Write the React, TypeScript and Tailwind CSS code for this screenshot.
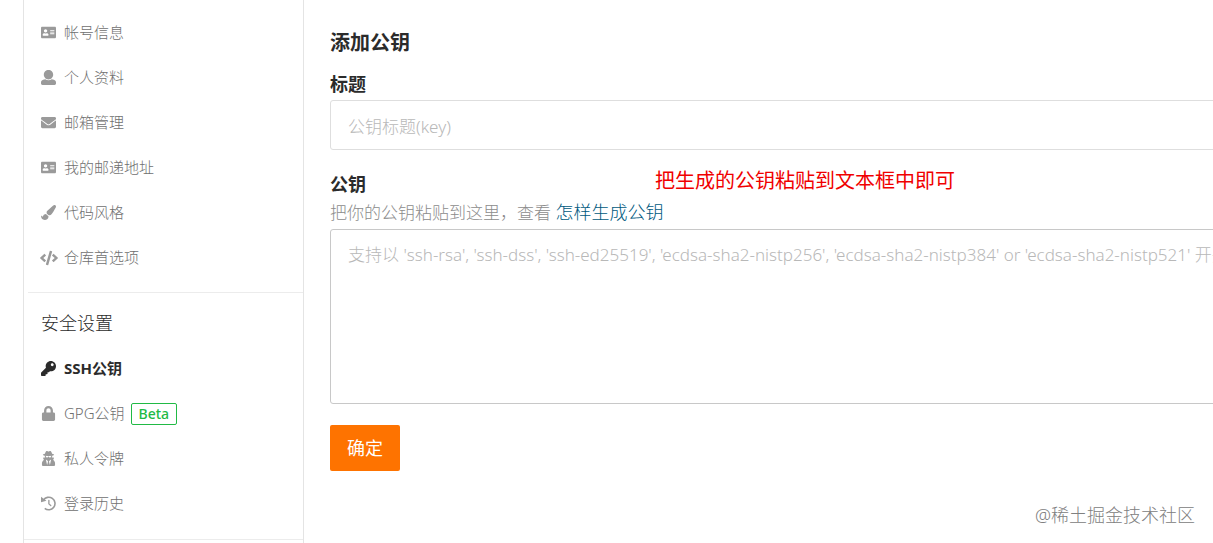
import { ReactNode } from 'react';
import { FaAddressCard, FaCode, FaEnvelope, FaKey, FaLock, FaPaintBrush, FaUserSecret } from 'react-icons/fa';

interface MenuItem {
  label: string;
  icon: ReactNode;
  active?: boolean;
  badge?: string;
}

function UserIcon() {
  return (
    <svg className="h-[15px] w-[15px]" viewBox="0 0 512 512" fill="currentColor">
      <path d="M256 0c88.366 0 160 71.634 160 160s-71.634 160-160 160S96 248.366 96 160 167.634 0 256 0zm183.283 333.821l-71.313-17.828c-74.923 53.89-165.738 41.864-223.94 0l-71.313 17.828C29.981 344.505 0 382.903 0 426.955V464c0 26.51 21.49 48 48 48h416c26.51 0 48-21.49 48-48v-37.045c0-44.052-29.981-82.45-72.717-93.134z" />
    </svg>
  );
}

function HistoryIcon() {
  return (
    <svg className="h-[15px] w-[15px]" viewBox="0 0 16 16" fill="none" stroke="currentColor">
      <path strokeWidth={1.7} d="M2.6 4.4A6.7 6.7 0 1 1 4 13.2" />
      <path strokeWidth={1.4} strokeLinecap="round" strokeLinejoin="round" d="M8.4 4.6v3.8l2 1.8" />
      <path fill="currentColor" stroke="none" d="M0 .9l5.8 4.2L0 6.6z" />
    </svg>
  );
}

const accountItems: MenuItem[] = [
  { label: '帐号信息', icon: <FaAddressCard /> },
  { label: '个人资料', icon: <UserIcon /> },
  { label: '邮箱管理', icon: <FaEnvelope /> },
  { label: '我的邮递地址', icon: <FaAddressCard /> },
  { label: '代码风格', icon: <FaPaintBrush /> },
  { label: '仓库首选项', icon: <FaCode className="h-[18px] w-[18px] shrink-0" /> },
];

const securityItems: MenuItem[] = [
  { label: 'SSH公钥', icon: <FaKey />, active: true },
  { label: 'GPG公钥', icon: <FaLock />, badge: 'Beta' },
  { label: '私人令牌', icon: <FaUserSecret /> },
  { label: '登录历史', icon: <HistoryIcon /> },
];

function MenuList({ items }: { items: MenuItem[] }) {
  return (
    <ul>
      {items.map((item) => (
        <li key={item.label}>
          <a
            href="#"
            className={`flex h-[45px] items-center gap-2 pl-[17px] text-[15px] ${
              item.active ? 'font-bold text-[#2b2b2b]' : 'font-light text-[#707070]'
            }`}
          >
            <span
              className={`flex w-[15px] shrink-0 justify-center ${
                item.active ? 'text-[#2b2b2b]' : 'text-[#9a9a9a]'
              }`}
            >
              {item.icon}
            </span>
            <span className="flex items-center gap-[6px]">
              {item.label}
              {item.badge && (
                <span className="rounded-xs border border-[#21ba45] px-[7px] text-sm leading-5 font-medium text-[#21ba45]">
                  {item.badge}
                </span>
              )}
            </span>
          </a>
        </li>
      ))}
    </ul>
  );
}

function Sidebar() {
  return (
    <nav className="w-[281px] shrink-0 border-x border-[#e4e4e4] pt-[10px]">
      <MenuList items={accountItems} />
      <hr className="mt-3 ml-1 border-[#ececec]" />
      <h2 className="pt-[17px] pb-[10px] pl-[17px] text-lg leading-[26px] font-light text-[#2b2b2b]">安全设置</h2>
      <MenuList items={securityItems} />
      <hr className="mt-[13px] border-[#ececec]" />
    </nav>
  );
}

export default function App() {
  return (
    <div className="relative flex min-h-screen overflow-hidden bg-white pl-[23px] font-['Noto_Sans','Noto_Sans_CJK_SC',sans-serif]">
      <Sidebar />

      <main className="min-w-0 flex-1 pt-[29px] pl-[26px]">
        <form className="relative min-w-[960px]" onSubmit={(e) => e.preventDefault()}>
          <h1 className="text-xl leading-7 font-bold text-[#2b2b2b]">添加公钥</h1>

          <label htmlFor="key-title" className="mt-[15px] block text-lg leading-6 font-bold text-[#2b2b2b]">
            标题
          </label>
          <input
            id="key-title"
            type="text"
            placeholder="公钥标题(key)"
            className="mt-1 block h-[50px] w-full rounded-[3px] border border-[#dedede] px-[17px] pt-[2px] text-[17px] font-light outline-none placeholder:text-[#b8b8b8]"
          />

          <label htmlFor="key-body" className="mt-[22px] block text-lg leading-6 font-bold text-[#2b2b2b]">
            公钥
          </label>
          <p className="mt-1 text-[17px] leading-[25px] font-light text-[#8c8c8c]">
            把你的公钥粘贴到这里，查看{' '}
            <a href="#" className="text-lg leading-[25px] text-[#005980]">
              怎样生成公钥
            </a>
          </p>
          <textarea
            id="key-body"
            placeholder="支持以 'ssh-rsa', 'ssh-dss', 'ssh-ed25519', 'ecdsa-sha2-nistp256', 'ecdsa-sha2-nistp384' or 'ecdsa-sha2-nistp521' 开头"
            className="mt-1 block h-[175px] w-full resize-none overflow-hidden rounded-[3px] border border-[#c8c8c8] px-[17px] py-3 text-[17px] leading-[26px] font-light whitespace-nowrap outline-none placeholder:text-[#b8b8b8]"
          />

          <button
            type="submit"
            className="mt-[21px] h-[46px] rounded-xs bg-[#fe7300] px-[17px] text-lg text-white"
          >
            确定
          </button>

          <p className="absolute top-[137px] left-[325px] text-xl leading-[30px] text-[#f00000]">
            把生成的公钥粘贴到文本框中即可
          </p>
        </form>
      </main>

      <p className="absolute right-[18px] bottom-[15px] text-lg leading-[26px] font-light text-[#808080]">
        @稀土掘金技术社区
      </p>
    </div>
  );
}
